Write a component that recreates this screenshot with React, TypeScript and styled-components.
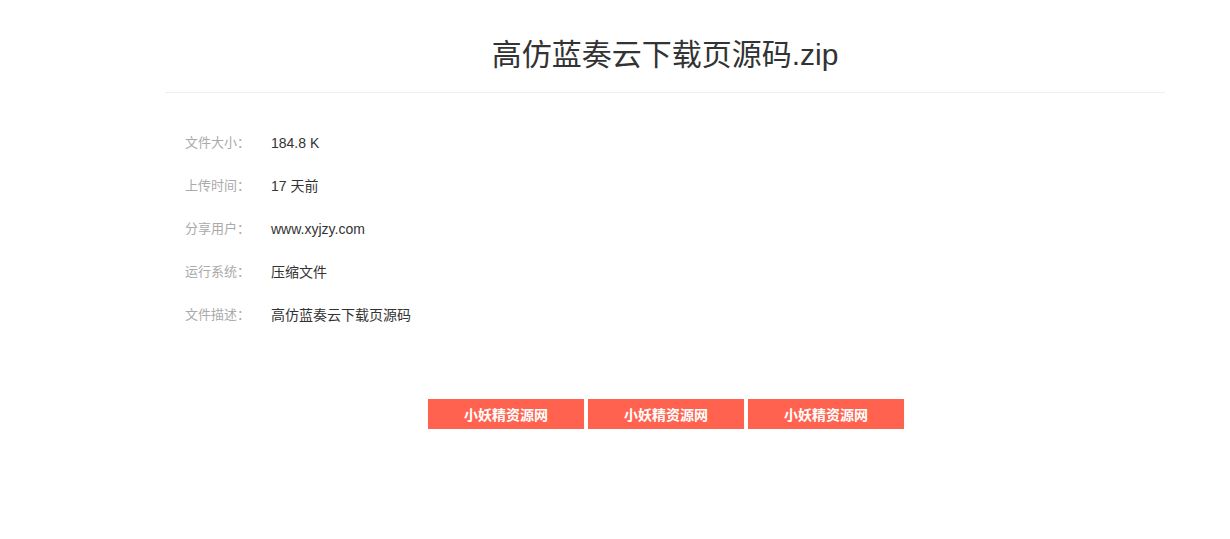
import React from "react";
import styled, { createGlobalStyle } from "styled-components";

const GlobalStyle = createGlobalStyle`
  body {
    margin: 0;
    background: #fff;
    font-family: "Liberation Sans", "Noto Sans CJK SC", sans-serif;
  }
`;

const rows = [
  { label: "文件大小：", value: "184.8 K" },
  { label: "上传时间：", value: "17 天前" },
  { label: "分享用户：", value: "www.xyjzy.com" },
  { label: "运行系统：", value: "压缩文件" },
  { label: "文件描述：", value: "高仿蓝奏云下载页源码" },
];

const App = () => {
  return (
    <>
      <GlobalStyle />
      <Container>
        <Header>
          <Title>高仿蓝奏云下载页源码.zip</Title>
        </Header>
        <InfoList>
          {rows.map((row) => (
            <InfoRow key={row.label}>
              <Label>{row.label}</Label>
              <Value>{row.value}</Value>
            </InfoRow>
          ))}
        </InfoList>
        <ButtonBar>
          <DownButton>小妖精资源网</DownButton>
          <DownButton>小妖精资源网</DownButton>
          <DownButton>小妖精资源网</DownButton>
        </ButtonBar>
      </Container>
    </>
  );
};

export default App;

const Container = styled.div`
  width: 1000px;
  margin-left: 165px;
`;

const Header = styled.div`
  padding: 35px 0 17px 0;
  border-bottom: 1px solid #eeeeee;

  display: flex;
  justify-content: center;
`;

const Title = styled.h1`
  margin: 0;
  font-size: 30px;
  line-height: 40px;
  font-weight: normal;
  color: #333333;
`;

const InfoList = styled.div`
  margin-top: 28px;
  padding-left: 20px;

  display: flex;
  flex-direction: column;
`;

const InfoRow = styled.div`
  height: 43px;

  display: flex;
  flex-direction: row;
  align-items: center;
`;

const Label = styled.span`
  width: 86px;
  font-size: 13px;
  line-height: 20px;
  color: #aaaaaa;
`;

const Value = styled.span`
  font-size: 14px;
  line-height: 20px;
  color: #333333;
`;

const ButtonBar = styled.div`
  margin-top: 63px;
  padding-left: 2px;

  display: flex;
  flex-direction: row;
  justify-content: center;
  gap: 4px;
`;

const DownButton = styled.div`
  width: 156px;
  height: 30px;
  background-color: #ff6350;
  color: #ffffff;
  font-size: 14px;
  font-weight: bold;
  box-shadow: 0 1px 1px rgba(0, 0, 0, 0.12);

  display: flex;
  justify-content: center;
  align-items: center;

  cursor: pointer;
`;
